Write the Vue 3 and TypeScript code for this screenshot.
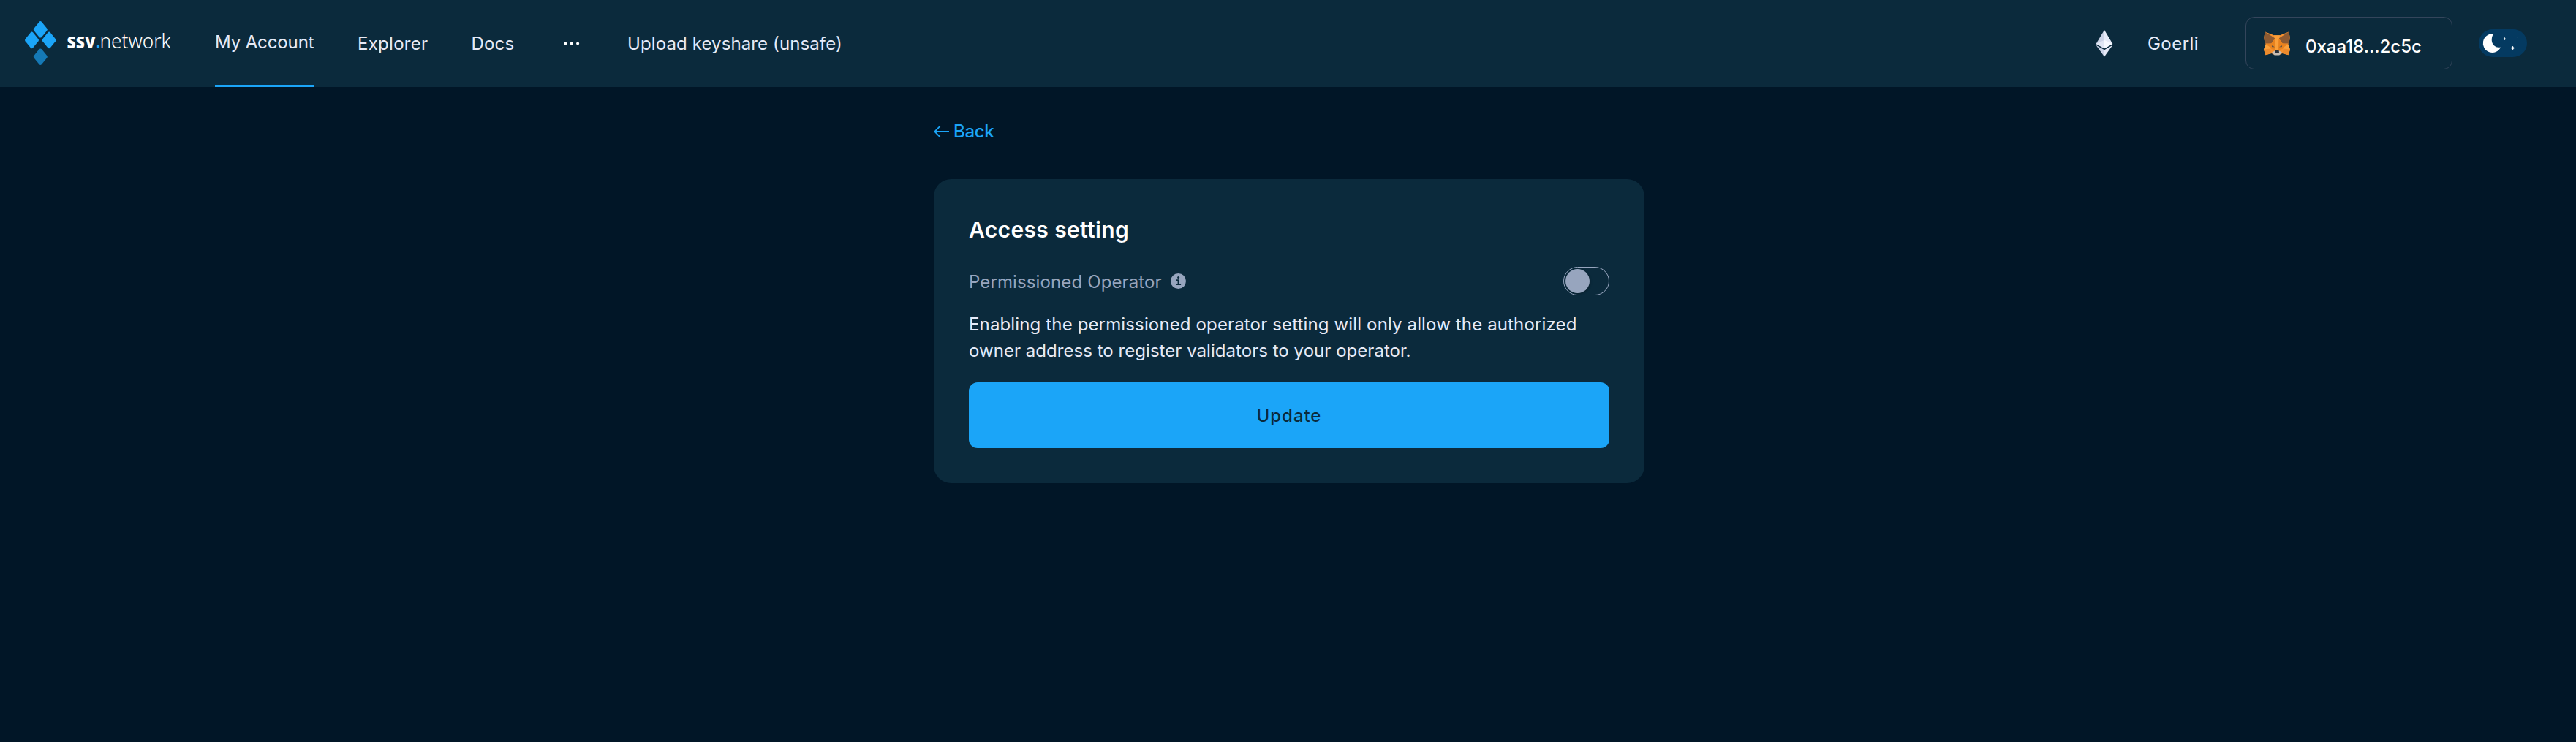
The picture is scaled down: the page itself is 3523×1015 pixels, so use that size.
<script setup lang="ts">
import { ref } from 'vue'

const address = '0xaa18...2c5c'
const permissioned = ref(false)
</script>

<template>
  <div class="app">
    <header class="header">
      <svg class="logo" width="212" height="119" viewBox="33 0 212 119" aria-label="ssv.network">
        <g fill="#1ba5f8">
          <path id="gem" d="M53.6 29.9Q55.3 28.1 57 29.9L64.3 38.9Q65.4 40.3 64.3 41.7L57 50.7Q55.3 52.4 53.6 50.7L46.3 41.7Q45.2 40.3 46.3 38.9Z" />
          <use href="#gem" x="-11.8" y="14.6" />
          <use href="#gem" x="11.8" y="14.6" />
          <use href="#gem" y="37.4" opacity=".65" />
        </g>
        <g class="wordmark" fill="#fff">
          <text x="91.5" y="66" textLength="39" lengthAdjust="spacingAndGlyphs" class="heavy">ssv</text>
          <text x="131" y="66" textLength="6" lengthAdjust="spacingAndGlyphs" class="heavy dot">.</text>
          <text x="136.5" y="66" textLength="97" lengthAdjust="spacingAndGlyphs" class="light">network</text>
        </g>
      </svg>
      <nav class="nav">
        <a class="item account">My Account</a>
        <a class="item explorer">Explorer</a>
        <a class="item docs">Docs</a>
        <svg class="more" width="22" height="6" viewBox="0 0 22 6" fill="#fff">
          <circle cx="2.3" cy="2.5" r="2" /><circle cx="10.7" cy="2.5" r="2" /><circle cx="19.1" cy="2.5" r="2" />
        </svg>
        <a class="item upload">Upload keyshare (unsafe)</a>
      </nav>
      <div class="tools">
        <svg class="eth" width="24" height="37" viewBox="0 0 24 37">
          <path d="M12 0L.6 19 12 25.3Z" fill="#cbd2e6" />
          <path d="M12 0L23.3 19 12 25.3Z" fill="#e6eaf7" />
          <path d="M12 13.8L.6 19 12 25.3Z" fill="#e1e6f4" />
          <path d="M12 13.8L23.3 19 12 25.3Z" fill="#f7f9ff" />
          <path d="M.6 20.7L12 27.2V36.5Z" fill="#cbd2e6" />
          <path d="M23.3 20.7L12 27.2V36.5Z" fill="#e6eaf7" />
        </svg>
        <span class="item network">Goerli</span>
        <button class="wallet">
          <svg class="fox" width="36" height="33" viewBox="0 0 36 33">
            <path d="M1.8.5L14 5.3H22L34.2.5 36 9 33.4 17.5 36 25 33.5 32.2 25.5 30 21.5 32H14.5L10.5 30 2.5 32.2 0 25 2.6 17.5 0 9Z" fill="#f6912f" />
            <path d="M1.8.5L15.5 9.5 10.3 16.5 2 16.5 0 9.5Z" fill="#8d5a32" />
            <path d="M34.2.5L20.5 9.5 25.7 16.5 34 16.5 36 9.5Z" fill="#8d5a32" />
            <path d="M14 5.3H22L20.3 13V25.5H15.7V13Z" fill="#fb9f39" />
            <path d="M15.5 9.5L16 25.5 10.5 24 2.6 17.5 10.3 16.5Z" fill="#e8821e" />
            <path d="M20.5 9.5L20 25.5 25.5 24 33.4 17.5 25.7 16.5Z" fill="#e8821e" />
            <path d="M2.6 17.5L11 23 0 24.8Z" fill="#f9a03c" />
            <path d="M33.4 17.5L25 23 36 24.8Z" fill="#f9a03c" />
            <path d="M0 24.8L9 24 10.5 30 2.5 32.2Z" fill="#ec8a2c" />
            <path d="M36 24.8L27 24 25.5 30 33.5 32.2Z" fill="#ec8a2c" />
            <path d="M10.8 19.2L15 21.3 11.5 21.2Z" fill="#36434f" />
            <path d="M25.2 19.2L21 21.3 24.5 21.2Z" fill="#36434f" />
            <path d="M11 28.8L15 26.5H21L25 28.8 21.3 32.5H14.7Z" fill="#c8bdb2" />
            <path d="M15.4 26L16.2 25.4H19.8L20.6 26 21 29H15Z" fill="#2b3138" />
          </svg>
          <span class="address">{{ address }}</span>
        </button>
        <svg class="theme" width="66" height="38" viewBox="0 0 66 38">
          <rect width="66" height="38" rx="19" fill="#043a61" />
          <path d="M19.8 6.4A12.8 12.8 0 1 0 30.1 24.7C21.5 26.1 14 18 19.8 6.4Z" fill="#fff" />
          <path d="M35.4 11.2Q35.7 13 37 13.3 35.7 13.6 35.4 15 35.1 13.6 33.8 13.3 35.1 13 35.4 11.2Z" fill="#fff" stroke="#fff" stroke-width=".4" />
          <path d="M53.4 9.4L54.5 10.6 53.4 11.8 52.3 10.6Z" fill="#fff" />
          <path d="M46.4 23Q47 25 48.8 25.6 47 26.2 46.4 28.3 45.8 26.2 44 25.6 45.8 25 46.4 23Z" fill="#fff" stroke="#fff" stroke-width=".6" />
        </svg>
      </div>
    </header>
    <div class="page">
      <main class="main">
        <a class="back">
          <svg width="22" height="18" viewBox="0 0 22 18" fill="none" stroke="#1ba5f8" stroke-width="1.8">
            <path d="M21 9H1.5M8.6 1.7L1.3 9l7.3 7.3" />
          </svg>
          <span>Back</span>
        </a>
        <section class="card">
          <h1>Access setting</h1>
          <div class="row">
            <span class="label">Permissioned Operator</span>
            <svg width="21" height="21" viewBox="0 0 21 21">
              <circle cx="10.5" cy="10.5" r="10.5" fill="#97a5be" />
              <g fill="#0b2a3c">
                <circle cx="10.6" cy="5.5" r="1.5" />
                <path d="M7.5 8.2H11.9V14H14.1V15.9H7.2V14H9.6V10.1H7.5Z" />
              </g>
            </svg>
            <button class="switch" role="switch" :aria-checked="permissioned"><i class="knob"></i></button>
          </div>
          <p>
            <span class="line first">Enabling the permissioned operator setting will only allow the authorized</span>
            <span class="line second">owner address to register validators to your operator.</span>
          </p>
          <button class="update">Update</button>
        </section>
      </main>
    </div>
  </div>
</template>

<style>
body { background: #011627; }
</style>

<style scoped>
.app {
  min-height: 1015px;
  background: #011627;
  color: #e6eaf7;
  font-family: Inter, sans-serif;
  font-size: 24px;
}
button { font: inherit; padding: 0; border: 0; background: none; color: inherit; }
svg { display: block; flex: none; }
.header {
  display: flex;
  height: 119px;
  padding: 0 67px 0 33px;
  box-sizing: border-box;
  background: #0b2a3c;
}
.wordmark { font-family: "Noto Sans", sans-serif; font-size: 28px; }
.heavy { font-weight: 800; }
.light { font-weight: 300; }
.dot { fill: #1ba5f8; }
.nav, .tools { display: flex; align-items: center; }
.nav { margin-left: 49px; }
.tools { height: 118px; margin-left: auto; }
.item { box-sizing: border-box; height: 119px; line-height: 119px; white-space: nowrap; }
.account {
  width: 136px;
  line-height: 115px;
  letter-spacing: -.12px;
  border-bottom: 3px solid #1ba5f8;
}
.explorer { width: 97px; margin-left: 59px; letter-spacing: .278px; }
.docs { width: 58px; margin-left: 58.5px; letter-spacing: .193px; }
.more { margin-left: 68px; }
.upload { margin-left: 65.5px; letter-spacing: .111px; }
.network { width: 69px; margin-left: 47px; letter-spacing: .45px; }
.wallet {
  display: flex;
  align-items: center;
  box-sizing: border-box;
  width: 283px;
  height: 72px;
  margin: 0 36px 0 65px;
  padding-left: 24px;
  border: 1px solid #34455b;
  border-radius: 12px;
  color: #fff;
  font-weight: 500;
}
.address { height: 70px; line-height: 79px; margin-left: 21px; }
.page { padding: 42px 0 0 3px; }
.main { width: 972px; margin: 0 auto; }
.back {
  display: flex;
  align-items: center;
  gap: 5px;
  height: 37px;
  line-height: 37px;
  color: #1ba5f8;
  font-weight: 500;
  letter-spacing: -.3px;
}
.card {
  margin-top: 47px;
  padding: 48px;
  border-radius: 24px;
  background: #0b2a3c;
}
h1 { margin: 0; font-size: 30px; line-height: 42px; font-weight: 600; letter-spacing: .365px; color: #fff; }
.row { display: flex; align-items: center; height: 39px; margin-top: 30px; }
.label { width: 276px; height: 39px; line-height: 41px; letter-spacing: .12px; color: #97a5be; }
.switch {
  display: flex;
  align-items: center;
  box-sizing: border-box;
  width: 63px;
  height: 39px;
  margin-left: auto;
  padding-left: 2px;
  border: 1px solid #97a5be;
  border-radius: 20px;
}
.knob { width: 33px; height: 33px; border-radius: 50%; background: #97a5be; box-shadow: 1px 1px 3px rgba(0, 0, 0, .25); }
p { margin: 21.5px 0 25.5px; line-height: 36px; }
.line { display: block; white-space: nowrap; }
.first { letter-spacing: .14px; }
.second { letter-spacing: .04px; }
.update {
  display: block;
  width: 100%;
  height: 90px;
  line-height: 91px;
  border-radius: 12px;
  background: #1ba5f8;
  color: #0b2a3c;
  font-weight: 500;
  letter-spacing: .95px;
}
</style>
